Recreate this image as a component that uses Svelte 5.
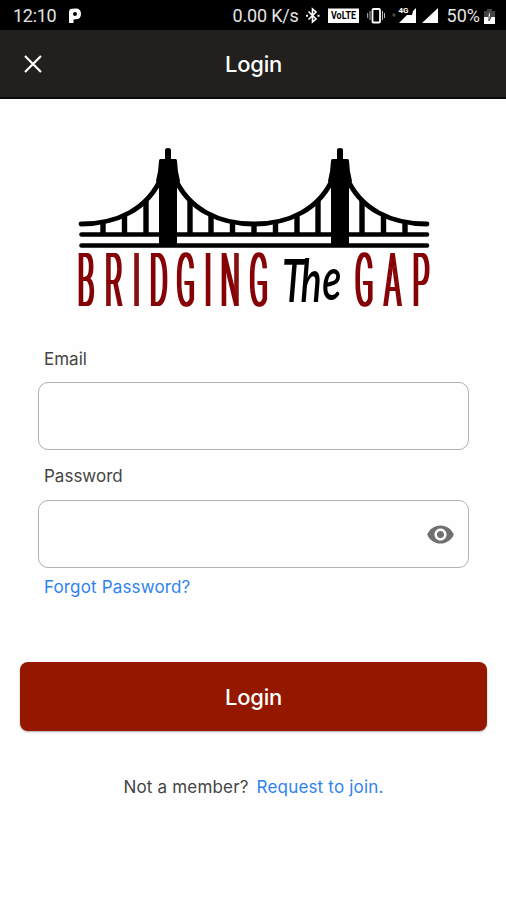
<script>
  let email = $state('');
  let password = $state('');
  let visible = $state(false);
  const hangers = [
    [103, 222], [124.5, 215], [146, 201], [190, 201], [211, 215], [232.5, 222], [254, 224],
    [275.5, 222], [297, 215], [318, 201], [362, 201], [383.5, 215], [405, 222]
  ];
</script>

<main>
  <div class="status">
    <span class="clock">12:10</span>
    <svg class="p" width="14" height="16" viewBox="0 0 14 16"><path fill="#fff" fill-rule="evenodd" d="M1 4Q1 1 4 .7L8 .5Q13 .5 13 6T7.5 11.3L5.5 11.5V15H1ZM7 4A2 2 0 1 0 7 8A2 2 0 1 0 7 4Z" /></svg>
    <span class="speed">0.00 K/s</span>
    <svg class="tray" width="142" height="22" viewBox="303 5 142 22" fill="none" stroke="#fff">
      <path d="M308.500 11.500l7.500 7.500-3.500 3V9l3.500 3-7.500 7.500" stroke-width="1.600" />
      <path d="M306 15.700h2M317.500 15.700h2" stroke-width="2" />
      <rect x="328" y="8.500" width="31" height="14.500" fill="#fff" stroke="none" />
      <text x="331" y="19.400" textLength="25" lengthAdjust="spacingAndGlyphs" class="lte">VoLTE</text>
      <rect x="372.500" y="9" width="7.500" height="13.500" rx="1" stroke-width="1.800" />
      <path d="M370 11v9M382.500 11v9M367.700 13v5M384.500 13v5" stroke-width="1" stroke="#bbb" />
      <circle cx="394" cy="15" r="1.700" fill="#444" stroke="none" />
      <path d="M416 8v15h-17l8-8h5l1-4Z M438 8v15h-16Z" fill="#fff" stroke="none" />
      <text x="398.500" y="13" class="four">4G</text>
    </svg>
    <span class="pct">50%</span>
    <svg width="11" height="17" viewBox="0 0 11 17"><path fill="#444" d="M3 1h5v2h3v7H0V3h3Z" /><path fill="#fff" d="M0 9h4l2-5v5h5v7H0Z" /><path d="M5 8v5l2-4" stroke="#333" fill="none" /></svg>
  </div>

  <header>
    <button class="close" aria-label="Close"><svg width="18" height="18" viewBox="0 0 18 18"><path d="M1 1l16 16M17 1L1 17" stroke="#fff" stroke-width="2.200" /></svg></button>
    <h1>Login</h1>
  </header>

  <svg class="logo" width="370" height="187" viewBox="70 140 370 187">
    <g fill="none" stroke="#000" stroke-linecap="round">
      <path d="M81 224C116 224 148 210 162 176M174 176C188 210 220 224 254 224S320 210 334 176M346 176C360 210 392 224 427 224" stroke-width="4.800" />
      <path d="M81.500 234.500H427M81.500 245.500H427" stroke-width="4.600" />
    </g>
    {#each hangers as [x, y]}
      <rect x={x - 2.7} {y} width="5.400" height={234 - y} />
    {/each}
    {#each [168, 340] as x}
      <path transform="translate({x} 0)" d="M-3 159V150Q-3 148 0 148T3 150V159H7.500Q9 159 9 161Q9.300 171 12 181L9 187V245H-9V187L-12 181Q-9.300 171 -9 161Q-9 159 -7.500 159Z" />
    {/each}
    <g class="red">
      <text transform="translate(1.700 305.500) scale(.36 1)" x="213 289 366 413 487 564.500 610 690">BRIDGING</text>
      <text transform="translate(1.700 305.500) scale(.36 1)" x="983 1064 1143">GAP</text>
    </g>
    <text class="the" transform="translate(282 302) scale(.66 1)" x="0 28 61" y="0 0 -2">The</text>
  </svg>

  <form onsubmit={(e) => e.preventDefault()}>
    <label for="email">Email</label>
    <div class="field"><input id="email" bind:value={email} /></div>
    <label for="password" class="second">Password</label>
    <div class="field">
      <input id="password" type={visible ? 'text' : 'password'} bind:value={password} />
      <button type="button" class="eye" aria-label="Show password" onclick={() => (visible = !visible)}>
        <svg width="29" height="29" viewBox="0 0 24 24"><path fill="#707070" d="M12 4.500C7 4.500 2.730 7.610 1 12c1.730 4.390 6 7.500 11 7.500s9.270-3.110 11-7.500c-1.730-4.390-6-7.500-11-7.500zM12 17c-2.760 0-5-2.240-5-5s2.240-5 5-5 5 2.240 5 5-2.240 5-5 5zm0-8c-1.660 0-3 1.340-3 3s1.340 3 3 3 3-1.340 3-3-1.340-3-3-3z" /></svg>
      </button>
    </div>
    <a class="forgot" href="#forgot">Forgot Password?</a>
    <button class="login">Login</button>
  </form>
  <p>Not a member?<a href="#join">Request to join.</a></p>
</main>

<style>
  :global(body) { margin: 0; background: #fefefe; }
  main { height: 900px; overflow: hidden; font-family: Inter, sans-serif; color: #444; }
  button { border: 0; padding: 0; background: none; font: inherit; display: flex; align-items: center; justify-content: center; }
  svg { display: block; flex: none; }
  .status { height: 30px; padding: 2px 11px 0 13px; box-sizing: border-box; background: #000; color: #e4e4e4; display: flex; align-items: center; font: 18px/28px Roboto, sans-serif; }
  .clock { width: 55px; letter-spacing: -.3px; }
  .speed { margin-left: auto; margin-right: 4px; letter-spacing: -.2px; }
  .tray { margin-right: 2px; }
  .pct { margin-right: 4px; }
  .lte { font: bold 10px Roboto, sans-serif; fill: #000; stroke: none; }
  .four { font: bold 8px Roboto, sans-serif; fill: #fff; stroke: none; }
  header { height: 69px; box-sizing: border-box; border-bottom: 2px solid #0c0b0a; background: #21201e; display: grid; grid-template-columns: 66px 1fr 66px; align-items: center; color: #fff; }
  .close { height: 50px; padding-top: 1px; }
  h1 { margin: 1px 0 0 1px; text-align: center; font-size: 22px; font-weight: 500; line-height: 30px; letter-spacing: -.2px; }
  .logo { margin: 41px 0 0 70px; }
  .red { fill: #850306; filter: drop-shadow(1.500px 0 0 #850306) drop-shadow(-1.500px 0 0 #850306); }
  .red text { font: 300 74px Roboto, sans-serif; }
  .the { font: italic 600 60px Lato, sans-serif; fill: #000; }
  form { padding: 20px 19px 0 20px; }
  label { display: block; padding-left: 24px; font-size: 17px; line-height: 24px; }
  .second { margin-top: 14px; }
  .field { margin: 11px 18px 0; height: 68px; box-sizing: border-box; border: 1.500px solid #b1b1b1; border-radius: 10px; display: flex; align-items: center; padding: 0 13px; }
  .second + .field { margin-top: 12px; }
  input { flex: 1; min-width: 0; height: 60px; border: 0; outline: 0; padding: 0; background: transparent; font: 17px Inter, sans-serif; }
  a { color: #2e83ef; text-decoration: none; }
  .forgot { display: block; padding-left: 24px; margin-top: 7px; font-size: 17px; line-height: 24px; letter-spacing: .15px; }
  .login { width: 100%; height: 69px; margin-top: 63px; border-radius: 8px; background: #941800; color: #fff; font-size: 22px; font-weight: 500; letter-spacing: -.2px; box-shadow: 0 1px 2px #aaa; }
  p { margin: 44px 0 0 1px; display: flex; justify-content: center; gap: 8px; font-size: 17px; line-height: 24px; letter-spacing: .18px; }
</style>
